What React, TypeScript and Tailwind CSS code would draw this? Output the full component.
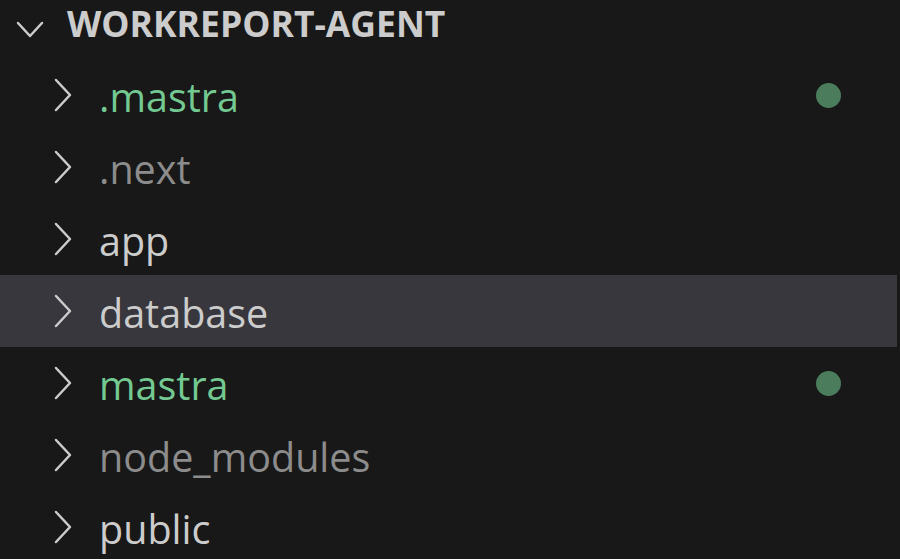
import React from 'react';

type Entry = {
  name: string;
  tone: 'normal' | 'added' | 'ignored';
  dot?: boolean;
  active?: boolean;
};

const entries: Entry[] = [
  { name: '.mastra', tone: 'added', dot: true },
  { name: '.next', tone: 'ignored' },
  { name: 'app', tone: 'normal' },
  { name: 'database', tone: 'normal', active: true },
  { name: 'mastra', tone: 'added', dot: true },
  { name: 'node_modules', tone: 'ignored' },
  { name: 'public', tone: 'normal' },
];

const toneClass = {
  normal: 'text-[#cccccc]',
  added: 'text-[#73c991]',
  ignored: 'text-[#8c8c8c]',
};

const ChevronRight = () => (
  <svg width="20" height="34" viewBox="0 0 20 34" fill="none" className="shrink-0">
    <path d="M3 2 L17 17 L3 32" stroke="#cccccc" strokeWidth="2.5" strokeLinecap="round" strokeLinejoin="round" />
  </svg>
);

const ChevronDown = () => (
  <svg width="28" height="18" viewBox="0 0 28 18" fill="none" className="shrink-0">
    <path d="M2 2 L14 15 L26 2" stroke="#cccccc" strokeWidth="2.5" strokeLinecap="round" strokeLinejoin="round" />
  </svg>
);

const Row = ({ entry }: { entry: Entry }) => (
  <div
    className={`flex items-center h-[72px] mr-[3px] pl-[53px] pr-[56px] ${
      entry.active ? 'bg-[#37373d]' : ''
    }`}
  >
    <ChevronRight />
    <span className={`ml-[26px] mt-[5px] text-[39.5px] leading-none ${toneClass[entry.tone]}`}>
      {entry.name}
    </span>
    <div className="flex-1" />
    {entry.dot && <span className="w-[25px] h-[25px] rounded-full bg-[#4b7d5c]" />}
  </div>
);

export default function App() {
  return (
    <div
      className="w-[900px] h-[559px] overflow-hidden bg-[#181818]"
      style={{ fontFamily: '"Open Sans", "Noto Sans", sans-serif' }}
    >
      <div className="flex items-center h-[59px] pl-[16px]">
        <ChevronDown />
        <span className="ml-[23px] -mt-[12px] text-[35.5px] font-bold leading-none text-[#cccccc]">
          WORKREPORT-AGENT
        </span>
      </div>
      {entries.map((e) => (
        <Row key={e.name} entry={e} />
      ))}
    </div>
  );
}
